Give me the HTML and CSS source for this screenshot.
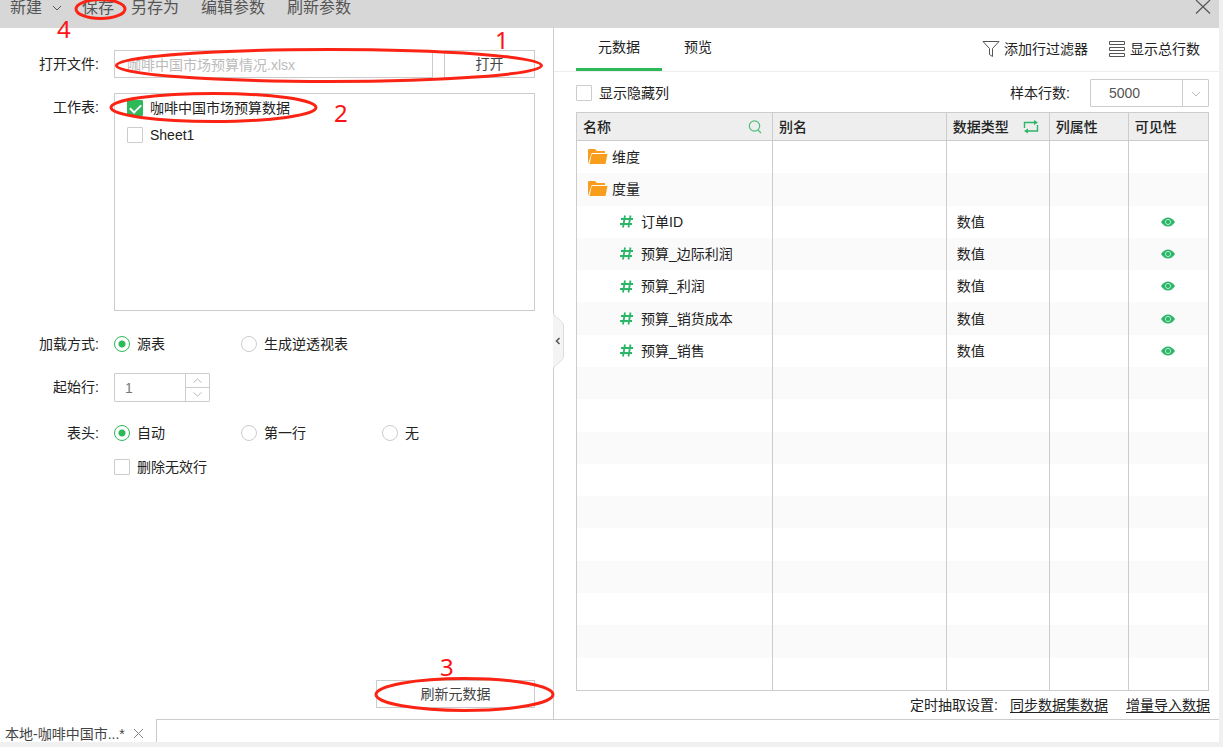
FILE: index.html
```html
<!DOCTYPE html>
<html lang="zh-CN">
<head>
<meta charset="utf-8">
<title>数据集</title>
<link rel="stylesheet" href="styles.css">
</head>
<body>
<div class="app">
  <header class="toolbar">
    <button type="button" class="tool tool-new">新建
      <svg width="10" height="6" viewBox="0 0 10 6"><path d="M1 1l4 4 4-4" fill="none" stroke="#555"/></svg>
    </button>
    <button type="button" class="tool tool-save">保存</button>
    <button type="button" class="tool tool-saveas">另存为</button>
    <button type="button" class="tool tool-params">编辑参数</button>
    <button type="button" class="tool">刷新参数</button>
    <button type="button" class="close" aria-label="关闭">
      <svg width="16" height="14" viewBox="0 0 16 14"><path d="M1 0l14 13.500M15 0L1 13.500" fill="none" stroke="#555" stroke-width="1.200"/></svg>
    </button>
  </header>

  <main class="main">
    <section class="source">
      <div class="form">
        <label class="name" for="file">打开文件:</label>
        <div class="file-row">
          <input id="file" class="box file" type="text" value="咖啡中国市场预算情况.xlsx" readonly>
          <button type="button" class="box open">打开</button>
        </div>
        <span class="name" id="sheets">工作表:</span>
        <div class="sheets" role="group" aria-labelledby="sheets">
          <label class="choice"><input type="checkbox" class="check" checked>咖啡中国市场预算数据</label>
          <label class="choice"><input type="checkbox" class="check">Sheet1</label>
        </div>
        <span class="name" id="mode">加载方式:</span>
        <div class="options" role="group" aria-labelledby="mode">
          <label class="choice"><input type="radio" class="radio" name="mode" checked>源表</label>
          <label class="choice"><input type="radio" class="radio" name="mode">生成逆透视表</label>
        </div>
        <label class="name" for="start">起始行:</label>
        <div class="spinner">
          <input id="start" type="text" inputmode="numeric" value="1">
          <div class="steps">
            <button type="button" aria-label="增加"><svg width="9" height="5" viewBox="0 0 9 5"><path d="M.5 4.500l4-3.500 4 3.500" fill="none" stroke="#bbb"/></svg></button>
            <button type="button" aria-label="减少"><svg width="9" height="5" viewBox="0 0 9 5"><path d="M.5 .5l4 3.500 4-3.500" fill="none" stroke="#bbb"/></svg></button>
          </div>
        </div>
        <span class="name" id="head">表头:</span>
        <div class="head-options">
          <div class="options" role="group" aria-labelledby="head">
            <label class="choice"><input type="radio" class="radio" name="head" checked>自动</label>
            <label class="choice"><input type="radio" class="radio" name="head">第一行</label>
            <label class="choice"><input type="radio" class="radio" name="head">无</label>
          </div>
          <label class="choice invalid"><input type="checkbox" class="check">删除无效行</label>
        </div>
      </div>
      <button type="button" class="box refresh">刷新元数据</button>
      <button type="button" class="collapse" aria-label="收起">
        <svg width="12" height="56" viewBox="0 0 12 56"><path d="M0 0C1 5 10 7 10 13V43C10 49 1 51 0 56Z" fill="#f4f4f4"/><path d="M.5 0C1 5 10.500 7 10.500 13V43C10.500 49 1 51 .5 56" fill="none" stroke="#ddd"/><path d="M6.500 25l-3 3 3 3" fill="none" stroke="#555" stroke-width="1.500"/></svg>
      </button>
    </section>

    <section class="meta">
      <nav class="tabs">
        <button type="button" class="tab active">元数据</button>
        <button type="button" class="tab">预览</button>
        <div class="actions">
          <button type="button" class="action">
            <svg width="18" height="18" viewBox="0 0 18 18"><path d="M1 1.500h16l-6.500 7v8l-3-2v-6z" fill="none" stroke="#555"/></svg>添加行过滤器
          </button>
          <button type="button" class="action">
            <svg width="18" height="18" viewBox="0 0 18 18"><path d="M1.500 1.500h15v3h-15zM1.500 7.500h15v3h-15zM1.500 13.500h15v3h-15z" fill="none" stroke="#555"/></svg>显示总行数
          </button>
        </div>
      </nav>
      <div class="filters">
        <label class="choice"><input type="checkbox" class="check">显示隐藏列</label>
        <div class="sample">
          <label for="rows">样本行数:</label>
          <div class="select">
            <select id="rows"><option>5000</option></select>
            <svg width="10" height="6" viewBox="0 0 10 6"><path d="M1 1l4 4 4-4" fill="none" stroke="#bbb"/></svg>
          </div>
        </div>
      </div>
      <div class="table-wrap">
        <table class="table">
          <colgroup><col class="c-name"><col class="c-alias"><col class="c-type"><col class="c-attr"><col></colgroup>
          <thead>
            <tr>
              <th><div class="th">名称<svg width="14" height="14" viewBox="0 0 14 14"><g fill="none" stroke="#4cbf7d" stroke-width="1.200"><circle cx="6.500" cy="6" r="5.200"/><path d="M10 10l3 3"/></g></svg></div></th>
              <th>别名</th>
              <th><div class="th">数据类型<svg width="16" height="14" viewBox="0 0 16 14"><path d="M1.500 8V2.500h10M14.500 5v6h-10" fill="none" stroke="#2cb768" stroke-width="1.400"/><path d="M11 0l4 2.500-4 2.500zM5 8.500L1 11l4 2.500z" fill="#2cb768"/></svg></div></th>
              <th>列属性</th>
              <th>可见性</th>
            </tr>
          </thead>
          <tbody>
            <tr><td><div class="folder"><svg width="20" height="16" viewBox="0 0 20 16"><path d="M0 15V1q0-1 1-1h6l2 2h8v2H5q-2 0-2 2z" fill="#f99d1c"/><path d="M4.500 5H19.500L17.500 15H1.500L3.500 6Z" fill="#f99d1c"/></svg>维度</div></td><td></td><td></td><td></td><td></td></tr>
            <tr><td><div class="folder"><svg width="20" height="16" viewBox="0 0 20 16"><path d="M0 15V1q0-1 1-1h6l2 2h8v2H5q-2 0-2 2z" fill="#f99d1c"/><path d="M4.500 5H19.500L17.500 15H1.500L3.500 6Z" fill="#f99d1c"/></svg>度量</div></td><td></td><td></td><td></td><td></td></tr>
            <tr><td><div class="field"><svg class="hash"><use href="#hash"/></svg>订单ID</div></td><td></td><td class="type">数值</td><td></td><td class="vis"><svg class="eye"><use href="#eye"/></svg></td></tr>
            <tr><td><div class="field"><svg class="hash"><use href="#hash"/></svg>预算_边际利润</div></td><td></td><td class="type">数值</td><td></td><td class="vis"><svg class="eye"><use href="#eye"/></svg></td></tr>
            <tr><td><div class="field"><svg class="hash"><use href="#hash"/></svg>预算_利润</div></td><td></td><td class="type">数值</td><td></td><td class="vis"><svg class="eye"><use href="#eye"/></svg></td></tr>
            <tr><td><div class="field"><svg class="hash"><use href="#hash"/></svg>预算_销货成本</div></td><td></td><td class="type">数值</td><td></td><td class="vis"><svg class="eye"><use href="#eye"/></svg></td></tr>
            <tr><td><div class="field"><svg class="hash"><use href="#hash"/></svg>预算_销售</div></td><td></td><td class="type">数值</td><td></td><td class="vis"><svg class="eye"><use href="#eye"/></svg></td></tr>
            <tr><td></td><td></td><td></td><td></td><td></td></tr>
            <tr><td></td><td></td><td></td><td></td><td></td></tr>
            <tr><td></td><td></td><td></td><td></td><td></td></tr>
            <tr><td></td><td></td><td></td><td></td><td></td></tr>
            <tr><td></td><td></td><td></td><td></td><td></td></tr>
            <tr><td></td><td></td><td></td><td></td><td></td></tr>
            <tr><td></td><td></td><td></td><td></td><td></td></tr>
            <tr><td></td><td></td><td></td><td></td><td></td></tr>
            <tr><td></td><td></td><td></td><td></td><td></td></tr>
            <tr><td></td><td></td><td></td><td></td><td></td></tr>
          </tbody>
        </table>
      </div>
      <div class="schedule">
        <span>定时抽取设置:</span>
        <a href="#sync">同步数据集数据</a>
        <a href="#import">增量导入数据</a>
      </div>
    </section>
  </main>

  <footer class="docs">
    <div class="doc">本地-咖啡中国市...*
      <button type="button" aria-label="关闭标签"><svg width="11" height="11" viewBox="0 0 11 11"><path d="M1 1l9 9M10 1l-9 9" fill="none" stroke="#888"/></svg></button>
    </div>
    <div class="docs-rest"></div>
  </footer>
</div>

<svg class="symbols" width="0" height="0">
  <symbol id="hash" viewBox="0 0 13 13"><path d="M5 .5L3 12.500M10.500 .5l-2 12M1 4h12M0 9h12" fill="none" stroke="#2cb768" stroke-width="1.800"/></symbol>
  <symbol id="eye" viewBox="0 0 14 10"><path d="M0 5Q3 .5 7 .5T14 5Q11 9.500 7 9.500T0 5Z" fill="#2cb768"/><circle cx="7" cy="5" r="2.600" fill="none" stroke="#b5e6ca"/></symbol>
</svg>

<svg class="notes" width="600" height="747" viewBox="0 0 600 747">
  <g class="rings">
    <ellipse cx="329" cy="65.500" rx="212.500" ry="16"/>
    <ellipse cx="213.500" cy="107.500" rx="102.500" ry="14"/>
    <ellipse cx="464.500" cy="694.500" rx="88.500" ry="16"/>
    <ellipse cx="100.500" cy="9" rx="24.500" ry="9.500"/>
  </g>
  <g class="digits">
    <text x="495" y="49">1</text>
    <text x="334" y="122">2</text>
    <text x="440" y="676">3</text>
    <text x="57" y="38">4</text>
  </g>
</svg>
</body>
</html>
```

FILE: styles.css
```css
* { box-sizing: border-box; }

body {
  margin: 0;
  padding: 0 4px 5px 0;
  background: #f0f0f0;
  color: #222;
  font: 14px/20px "Liberation Sans", "Noto Sans CJK SC", sans-serif;
}

button, input, select { font: inherit; color: inherit; }
button { border: 0; padding: 0; background: none; cursor: pointer; white-space: nowrap; }
svg { display: block; flex: none; }

.app {
  display: flex;
  flex-direction: column;
  height: calc(100vh - 5px);
  background: #fff;
}

/* toolbar */
.toolbar {
  display: flex;
  align-items: flex-start;
  height: 28px;
  padding: 0 8px 0 10px;
  background: #d7d7d7;
  color: #555;
  font-size: 16px;
  line-height: 16px;
}
.tool-new { display: flex; align-items: center; gap: 10px; margin-right: 20px; }
.tool-save { margin-right: 17px; }
.tool-saveas, .tool-params { margin-right: 22px; }
.close { margin-left: auto; }

.main { flex: 1; display: grid; grid-template-columns: 5fr 6fr; min-height: 0; }

/* source form */
.source {
  position: relative;
  display: flex;
  flex-direction: column;
  padding: 22px 18px 11px 0;
  border-right: 1px solid #ccc;
}
.form {
  display: grid;
  grid-template-columns: 99px 1fr;
  gap: 15px;
}
.name { text-align: right; line-height: 28px; }
.box { height: 28px; border: 1px solid #ccc; background: #fff; }
.file-row { display: flex; gap: 11px; }
.file { flex: 1; min-width: 0; padding: 0 12px; color: #bbb; border-radius: 0; }
.open { width: 91px; color: #444; }
.sheets {
  display: flex;
  flex-direction: column;
  gap: 7px;
  height: 218px;
  margin-bottom: 4px;
  padding: 4px 12px;
  border: 1px solid #ccc;
}
.choice { display: flex; align-items: center; gap: 7px; }
.check, .radio {
  appearance: none;
  flex: none;
  width: 16px;
  height: 16px;
  margin: 0;
  border: 1px solid #ccc;
  background: #fff;
}
.check { border-radius: 1px; }
.check:checked {
  border-color: #2db85a;
  background: #2db85a;
}
.check:checked::before {
  content: "";
  display: block;
  width: 9px;
  height: 5px;
  margin: 3px auto 0;
  border: solid #fff;
  border-width: 0 0 2px 2px;
  transform: rotate(-45deg);
}
.radio { border-radius: 50%; }
.radio:checked {
  border-color: #2db85a;
  background: radial-gradient(circle, #2db85a 3px, #fff 4px);
}
.options { display: grid; grid-template-columns: 127px 141px 1fr; height: 28px; }
.spinner {
  display: flex;
  width: 96px;
  height: 29px;
  margin-bottom: 2px;
  border: 1px solid #ccc;
  border-radius: 1px;
}
.spinner input { flex: 1; min-width: 0; border: 0; padding: 0 10px; color: #777; background: none; }
.steps { display: flex; flex-direction: column; width: 24px; border-left: 1px solid #ccc; }
.steps button { flex: 1; display: flex; align-items: center; justify-content: center; }
.steps button + button { border-top: 1px solid #ccc; }
.invalid { height: 28px; margin-top: 6px; }
.refresh { align-self: flex-end; width: 159px; margin-top: auto; color: #444; }
.collapse { position: absolute; top: 285px; right: -12px; }

/* metadata pane */
.meta { display: flex; flex-direction: column; min-width: 0; }
.tabs { display: flex; height: 44px; padding: 0 19px 0 22px; border-bottom: 1px solid #eee; }
.tab { padding: 0 22px 2px; border-bottom: 3px solid transparent; }
.active { border-color: #2db85a; }
.actions { display: flex; gap: 20px; margin-left: auto; padding-bottom: 2px; }
.action { display: flex; align-items: center; gap: 4px; }
.filters {
  display: flex;
  justify-content: space-between;
  padding: 7px 10px 5px 22px;
}
.sample { display: flex; align-items: center; gap: 20px; }
.select { position: relative; width: 119px; height: 28px; }
.select select {
  appearance: none;
  width: 100%;
  height: 100%;
  padding: 0 18px;
  border: 1px solid #ccc;
  border-radius: 1px;
  background: linear-gradient(#ccc, #ccc) right 25px top / 1px 100% no-repeat #fff;
  color: #555;
}
.select svg { position: absolute; right: 8px; top: 12px; pointer-events: none; }

.table-wrap { flex: 1; min-height: 0; margin: 0 10px 0 22px; }
.table {
  width: 100%;
  height: 100%;
  table-layout: fixed;
  border-collapse: separate;
  border-spacing: 0;
  border: solid #ccc;
  border-width: 1px 0 1px 1px;
}
.c-name { width: 31%; }
.c-alias { width: 27.5%; }
.c-type { width: 16.3%; }
.c-attr { width: 12.5%; }
.table th {
  height: 28px;
  padding: 0 6px;
  border-right: 1px solid #ccc;
  border-bottom: 1px solid #ccc;
  background: #eee;
  text-align: left;
  font-weight: 500;
}
.th { display: flex; align-items: center; justify-content: space-between; padding-right: 4px; }
.table td { height: 32px; padding: 0; border-right: 1px solid #ccc; }
.table tbody tr:nth-child(even) { background: #fafafa; }
.folder { display: flex; align-items: center; gap: 4px; padding-left: 11px; }
.field { display: flex; align-items: center; gap: 8px; padding-left: 43px; }
.hash { width: 13px; height: 13px; }
.eye { width: 14px; height: 10px; margin: 0 auto; }
.table .type { padding-left: 10px; }
.symbols { position: absolute; }

.schedule { display: flex; justify-content: flex-end; height: 28px; padding: 4px 9px 0 0; }
.schedule span { margin-right: 12px; }
.schedule a { color: inherit; text-underline-offset: 2px; }
.schedule a + a { margin-left: 18px; }

/* document tabs */
.docs { display: flex; height: 23px; overflow: hidden; }
.doc {
  display: flex;
  align-items: center;
  gap: 8px;
  width: 156px;
  padding: 6px 0 0 5px;
  color: #444;
}
.docs-rest { flex: 1; border: solid #ccc; border-width: 1px 0 0 1px; }

/* step annotations drawn over the page */
.notes { position: absolute; left: 0; top: 0; pointer-events: none; }
.rings { fill: none; stroke: #fb2414; stroke-width: 3px; }
.digits { fill: #fb1414; font: 24px "Noto Sans", sans-serif; }
```
